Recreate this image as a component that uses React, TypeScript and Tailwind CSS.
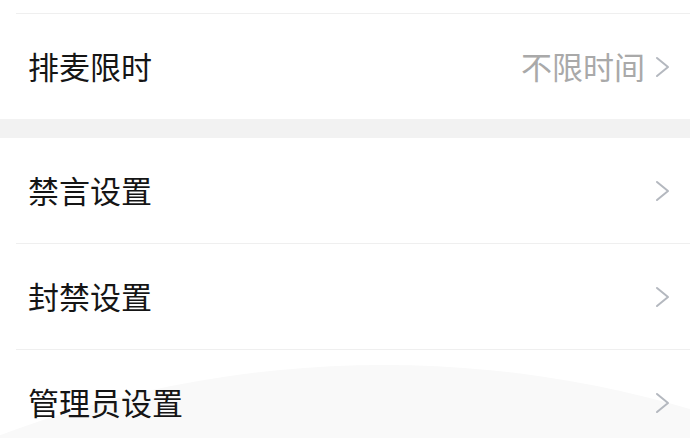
import React from "react";

type Item = { label: string; value?: string };

const Chevron = () => (
  <svg width="17" height="22" viewBox="0 0 17 22" fill="none" className="shrink-0">
    <polyline
      points="3,2 14,11 3,20"
      stroke="#b4b8bf"
      strokeWidth="2"
      strokeLinecap="round"
      strokeLinejoin="round"
    />
  </svg>
);

function Row({ item, divider = true }: { item: Item; divider?: boolean }) {
  return (
    <div className={divider ? "ml-4 border-b border-[#efefef]" : "ml-4"}>
      <div className="flex h-[105px] items-center pl-3 pr-[19px]">
        <span className="flex-1 text-[31px] text-[#151515]">{item.label}</span>
        {item.value && <span className="mr-[9px] text-[31px] text-[#a9a9a9]">{item.value}</span>}
        <Chevron />
      </div>
    </div>
  );
}

export default function App() {
  const groupTwo: Item[] = [{ label: "禁言设置" }, { label: "封禁设置" }, { label: "管理员设置" }];

  return (
    <div
      className="relative h-[438px] w-[690px] overflow-hidden bg-white"
      style={{ fontFamily: '"Noto Sans CJK SC", "Noto Sans", sans-serif' }}
    >
      {/* faint curved backdrop at the bottom */}
      <div className="absolute left-[-701px] top-[365px] h-[2170px] w-[2170px] rounded-full bg-[#f9f9f9]" />

      <div className="relative">
        {/* tail of the row above */}
        <div className="ml-4 h-[14px] border-b border-[#efefef]" />
        <Row item={{ label: "排麦限时", value: "不限时间" }} divider={false} />

        <div className="h-[19px] bg-[#f2f2f2]" />

        {groupTwo.map((item) => (
          <Row key={item.label} item={item} />
        ))}
      </div>
    </div>
  );
}
